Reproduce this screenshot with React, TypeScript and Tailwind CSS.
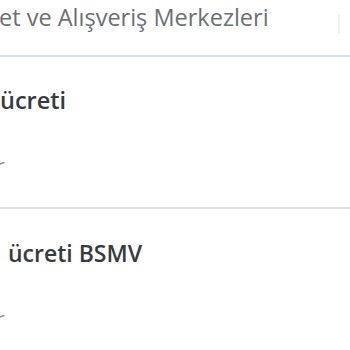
function Tick() {
  return (
    <svg width="6" height="6" viewBox="0 0 6 6" className="block">
      <path d="M0 4 L4 2.5" stroke="#8a8f96" strokeWidth="1.4" strokeLinecap="round" />
    </svg>
  );
}

export default function App() {
  return (
    <div className="w-[350px] h-[350px] overflow-hidden bg-white font-['Open_Sans',sans-serif]">
      <div className="h-[57px] border-b-2 border-[#dde2e7] pt-[1px] relative">
        <p className="text-[23.5px] leading-[32px] text-[#6b7078] -ml-[1px] whitespace-nowrap">
          et ve Alışveriş Merkezleri
        </p>
        <div className="absolute right-[10px] top-[15px] w-[2px] h-[18px] bg-[#f0f1f2]" />
      </div>
      <div className="h-[152px] border-b-2 border-[#dde2e7] pt-[27px]">
        <h3 className="text-[23.5px] leading-[32px] font-semibold text-[#363b42] whitespace-nowrap">ücreti</h3>
        <div className="mt-[44px]">
          <Tick />
        </div>
      </div>
      <div className="pt-[28px]">
        <h3 className="text-[23px] leading-[32px] font-semibold text-[#363b42] whitespace-nowrap pl-[8px]">ücreti BSMV</h3>
        <div className="mt-[44px]">
          <Tick />
        </div>
      </div>
    </div>
  );
}
